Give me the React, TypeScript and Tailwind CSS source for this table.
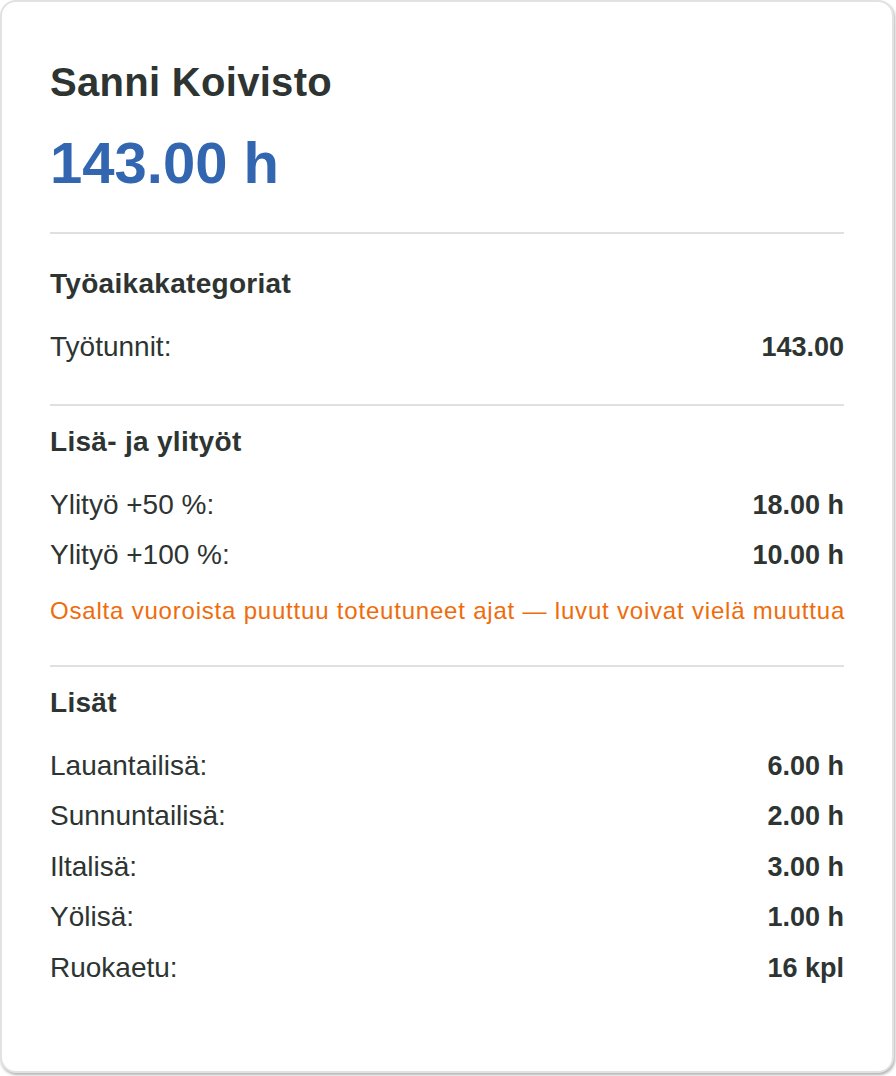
const rows1 = [{ label: "Työtunnit:", value: "143.00" }];

const rows2 = [
  { label: "Ylityö +50 %:", value: "18.00 h" },
  { label: "Ylityö +100 %:", value: "10.00 h" },
];

const rows3 = [
  { label: "Lauantailisä:", value: "6.00 h" },
  { label: "Sunnuntailisä:", value: "2.00 h" },
  { label: "Iltalisä:", value: "3.00 h" },
  { label: "Yölisä:", value: "1.00 h" },
  { label: "Ruokaetu:", value: "16 kpl" },
];

const Row = ({ label, value }: { label: string; value: string }) => (
  <div className="flex items-center justify-between py-[5px] leading-[40.5px]">
    <span className="text-[28px]">{label}</span>
    <span className="text-[27px] font-bold">{value}</span>
  </div>
);

const SectionTitle = ({ children }: { children: string }) => (
  <h2 className="text-[28px] font-bold leading-[34px] tracking-[0.3px]">{children}</h2>
);

export default function App() {
  return (
    <div className="min-h-screen bg-white font-['Liberation_Sans',Arial,sans-serif] text-[#2d3432]">
      <div className="flex h-[1073px] w-[894px] flex-col rounded-[16px] border-2 border-[#e2e2e2] bg-white px-[48px] pt-[56px] shadow-[1px_2px_3px_rgba(0,0,0,0.3)]">
        <h1 className="text-[40px] font-bold leading-[48px] tracking-[0.3px]">Sanni Koivisto</h1>
        <div className="mt-[25px] text-[58px] font-bold leading-[64px] text-[#3366b1]">143.00 h</div>

        <div className="mt-[37px] h-[2px] bg-[#e0e0e0]" />

        <section className="mt-[33px]">
          <SectionTitle>Työaikakategoriat</SectionTitle>
          <div className="mt-[21px]">
            {rows1.map((r) => (
              <Row key={r.label} {...r} />
            ))}
          </div>
        </section>

        <div className="mt-[31px] h-[2px] bg-[#e0e0e0]" />

        <section className="mt-[19px]">
          <SectionTitle>Lisä- ja ylityöt</SectionTitle>
          <div className="mt-[21px]">
            {rows2.map((r) => (
              <Row key={r.label} {...r} />
            ))}
          </div>
          <p className="mt-[14px] whitespace-nowrap text-[24px] leading-[32px] tracking-[0.8px] text-[#ee6c0c]">
            Osalta vuoroista puuttuu toteutuneet ajat — luvut voivat vielä muuttua
          </p>
        </section>

        <div className="mt-[38px] h-[2px] bg-[#e0e0e0]" />

        <section className="mt-[19px]">
          <SectionTitle>Lisät</SectionTitle>
          <div className="mt-[21px]">
            {rows3.map((r) => (
              <Row key={r.label} {...r} />
            ))}
          </div>
        </section>
      </div>
    </div>
  );
}
